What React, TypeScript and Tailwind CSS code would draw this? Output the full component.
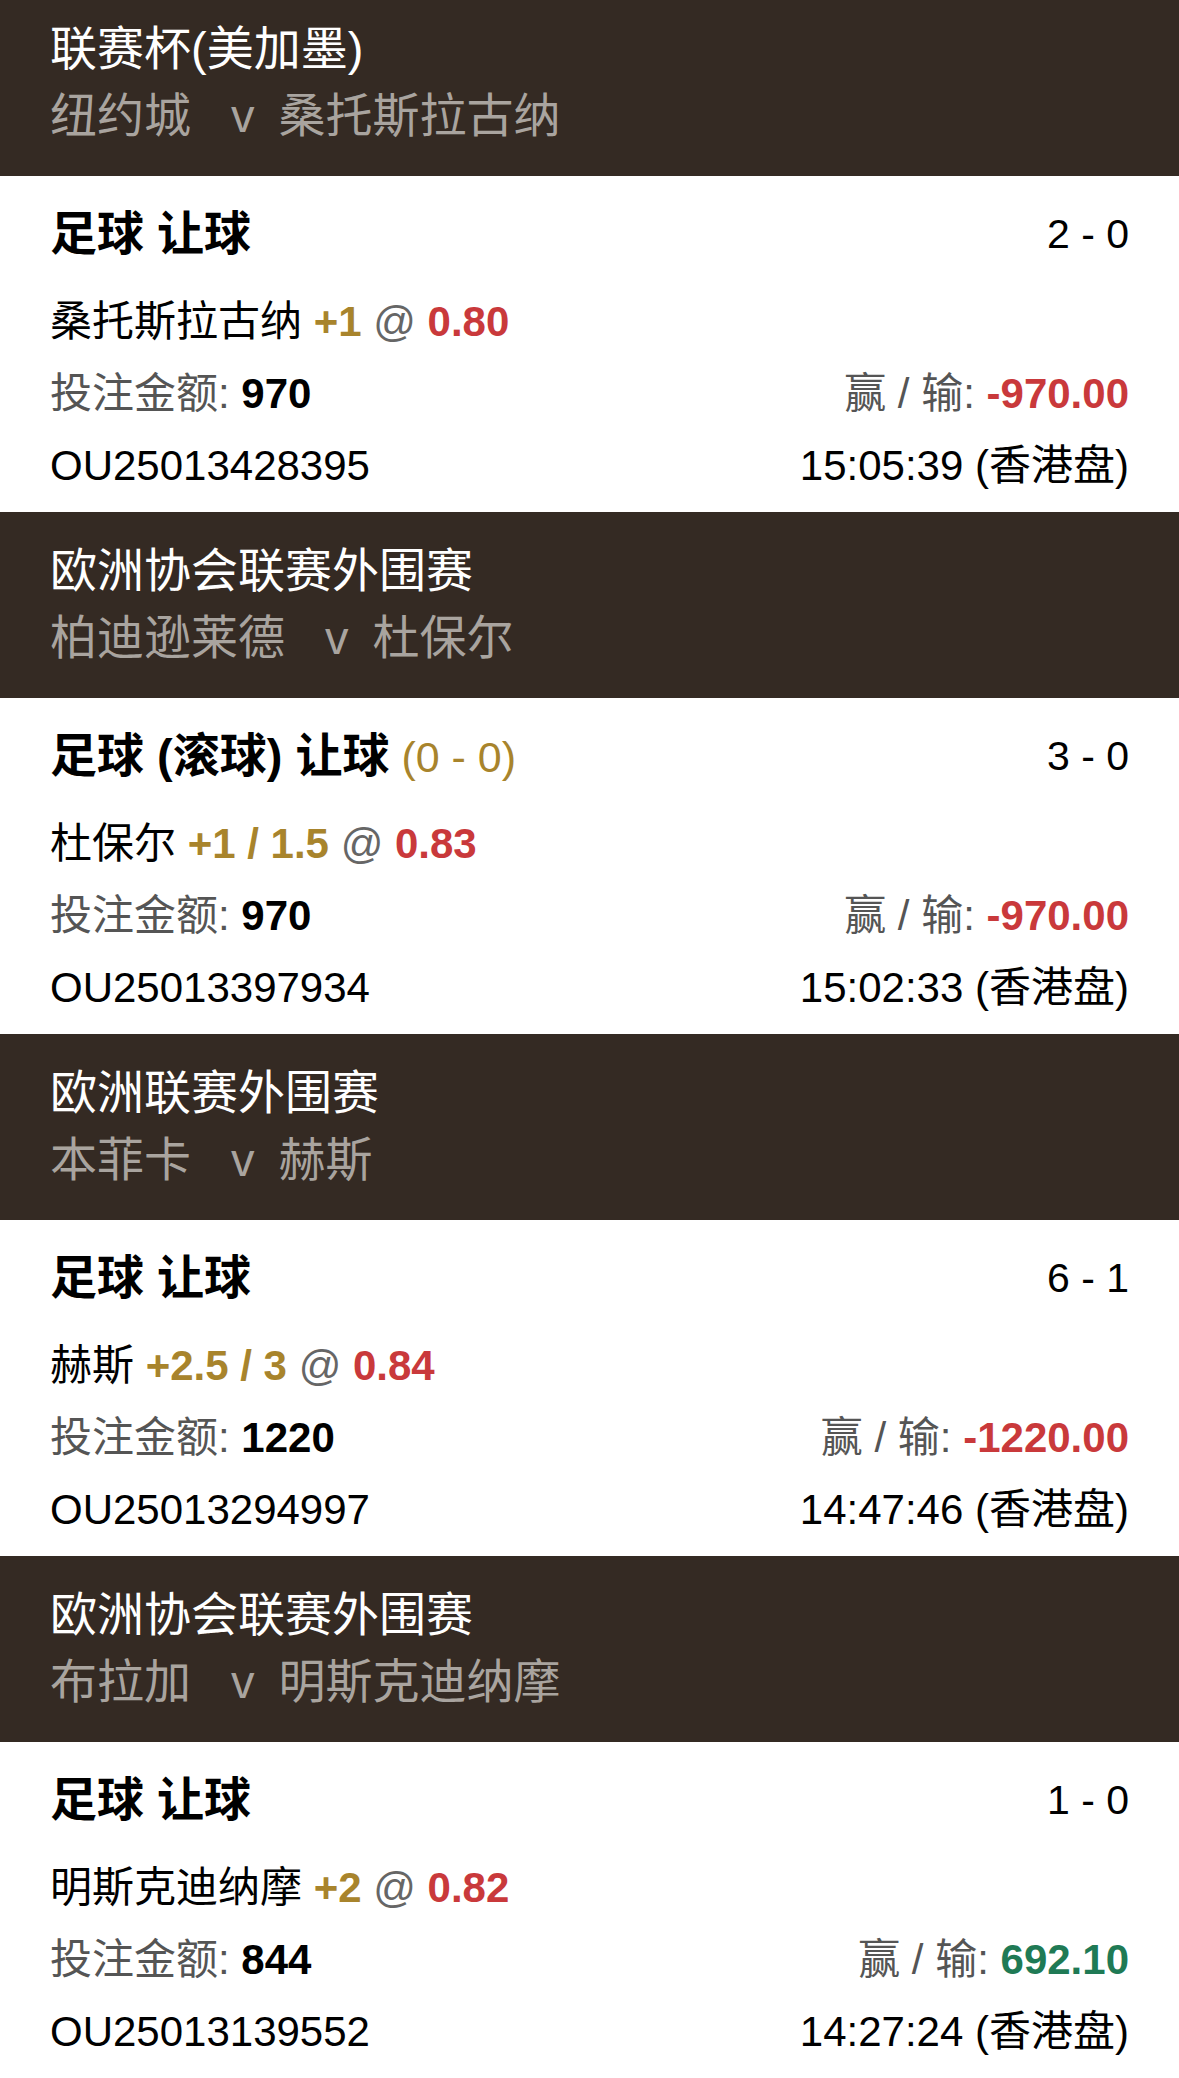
const bets = [
  {
    league: "联赛杯(美加墨)",
    home: "纽约城",
    away: "桑托斯拉古纳",
    live: false,
    liveScore: "",
    score: "2 - 0",
    pick: "桑托斯拉古纳",
    hcp: "+1",
    odds: "0.80",
    stake: "970",
    result: "-970.00",
    win: false,
    id: "OU25013428395",
    time: "15:05:39",
  },
  {
    league: "欧洲协会联赛外围赛",
    home: "柏迪逊莱德",
    away: "杜保尔",
    live: true,
    liveScore: "(0 - 0)",
    score: "3 - 0",
    pick: "杜保尔",
    hcp: "+1 / 1.5",
    odds: "0.83",
    stake: "970",
    result: "-970.00",
    win: false,
    id: "OU25013397934",
    time: "15:02:33",
  },
  {
    league: "欧洲联赛外围赛",
    home: "本菲卡",
    away: "赫斯",
    live: false,
    liveScore: "",
    score: "6 - 1",
    pick: "赫斯",
    hcp: "+2.5 / 3",
    odds: "0.84",
    stake: "1220",
    result: "-1220.00",
    win: false,
    id: "OU25013294997",
    time: "14:47:46",
  },
  {
    league: "欧洲协会联赛外围赛",
    home: "布拉加",
    away: "明斯克迪纳摩",
    live: false,
    liveScore: "",
    score: "1 - 0",
    pick: "明斯克迪纳摩",
    hcp: "+2",
    odds: "0.82",
    stake: "844",
    result: "692.10",
    win: true,
    id: "OU25013139552",
    time: "14:27:24",
  },
];

export default function App() {
  return (
    <div className="w-[1179px] h-[2078px] overflow-hidden bg-white font-[family-name:'Liberation_Sans','Noto_Sans_CJK_SC',sans-serif]">
      <div className="-mt-[10px]">
        {bets.map((b) => (
          <div key={b.id}>
            {/* League header */}
            <div className="h-[186px] bg-[#342a23] px-[50px] pt-[25px] text-[47px] leading-[67px]">
              <div className="text-white">{b.league}</div>
              <div className="text-[#a9a49f] whitespace-nowrap">
                {b.home}
                <span className="ml-[40px] mr-[24px]">v</span>
                {b.away}
              </div>
            </div>

            {/* Bet card */}
            <div className="h-[336px] px-[50px] pt-[24px] text-black">
              <div className="flex items-center justify-between h-[68px]">
                <div className="text-[47px] leading-[68px]">
                  <span className="font-bold">
                    {b.live ? "足球 (滚球) 让球" : "足球 让球"}
                  </span>
                  {b.live && (
                    <span className="text-[#a8842c] text-[43px]"> {b.liveScore}</span>
                  )}
                </div>
                <div className="text-[41px] leading-[68px]">{b.score}</div>
              </div>

              <div className="mt-[18px] text-[42px] leading-[72px]">
                <div>
                  {b.pick} <span className="font-bold text-[#a8842c]">{b.hcp}</span>{" "}
                  <span className="text-[#666]">@</span>{" "}
                  <span className="font-bold text-[#c9393b]">{b.odds}</span>
                </div>
                <div className="flex justify-between">
                  <div>
                    <span className="text-[#555]">投注金额: </span>
                    <span className="font-bold">{b.stake}</span>
                  </div>
                  <div>
                    <span className="text-[#555]">赢 / 输: </span>
                    <span
                      className={
                        b.win ? "font-bold text-[#1f7a55]" : "font-bold text-[#c9393b]"
                      }
                    >
                      {b.result}
                    </span>
                  </div>
                </div>
                <div className="flex justify-between">
                  <div>{b.id}</div>
                  <div>{b.time} (香港盘)</div>
                </div>
              </div>
            </div>
          </div>
        ))}
      </div>
    </div>
  );
}
